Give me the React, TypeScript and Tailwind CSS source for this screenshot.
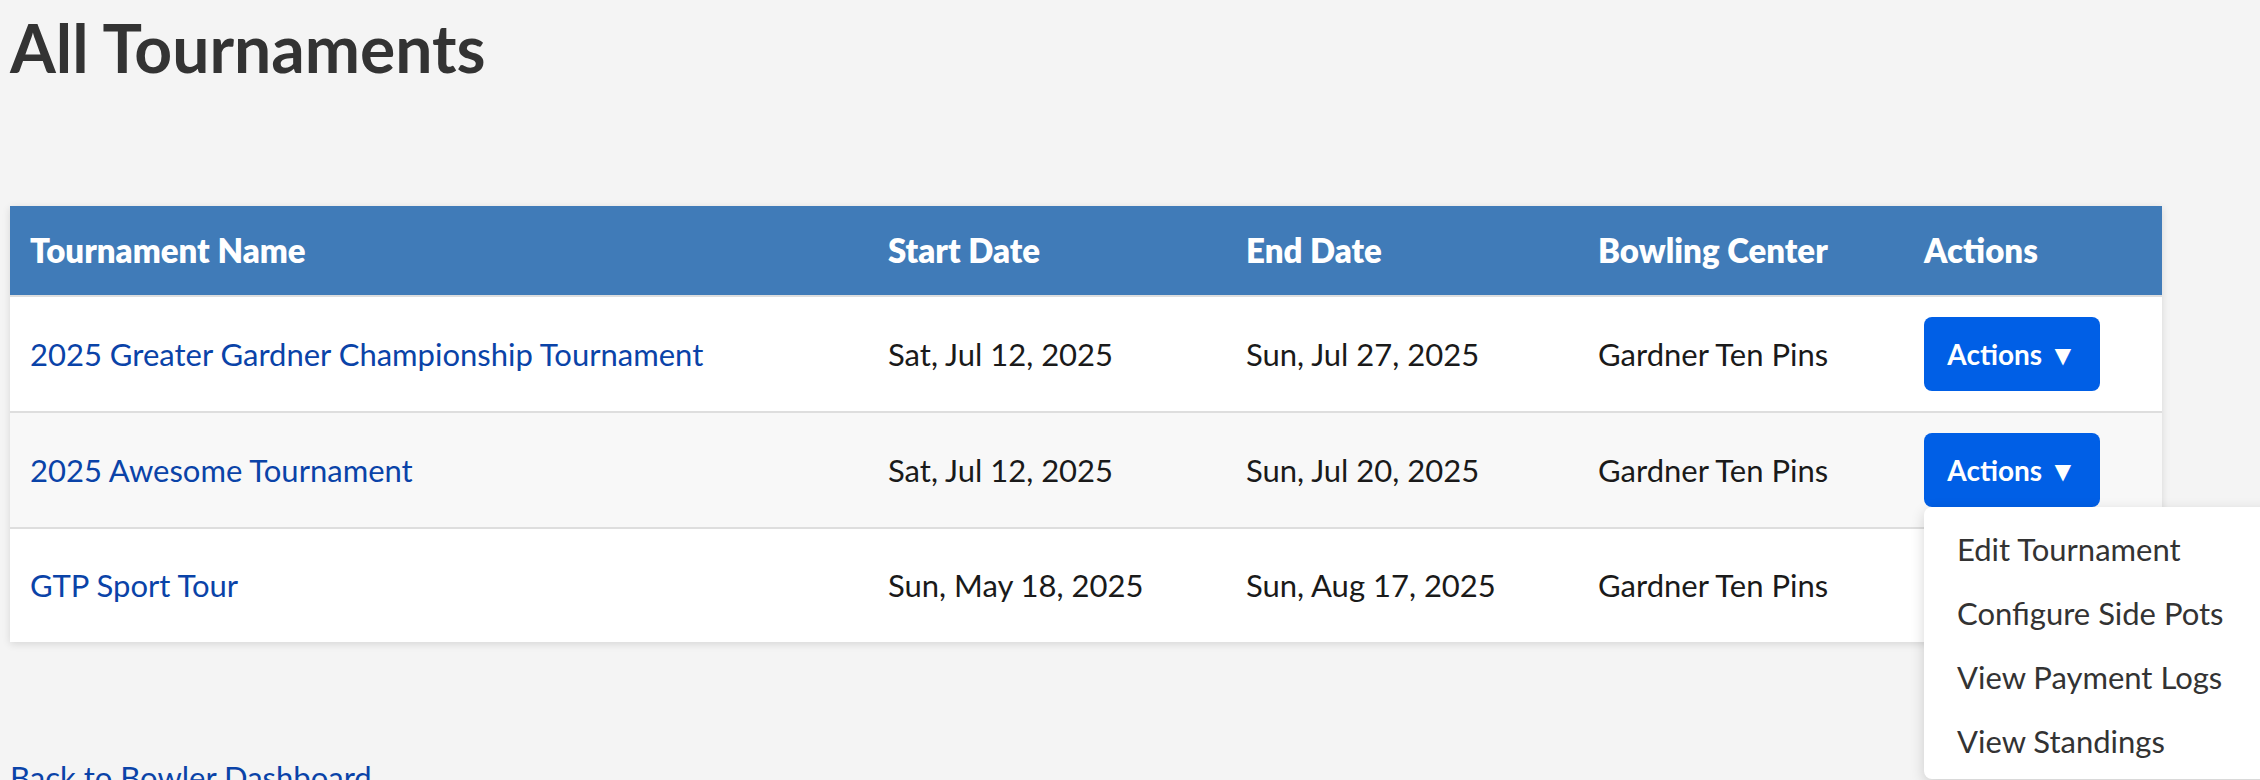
import { useState } from 'react';

interface Tournament {
  id: number;
  name: string;
  start: string;
  end: string;
  center: string;
}

const tournaments: Tournament[] = [
  { id: 1, name: '2025 Greater Gardner Championship Tournament', start: 'Sat, Jul 12, 2025', end: 'Sun, Jul 27, 2025', center: 'Gardner Ten Pins' },
  { id: 2, name: '2025 Awesome Tournament', start: 'Sat, Jul 12, 2025', end: 'Sun, Jul 20, 2025', center: 'Gardner Ten Pins' },
  { id: 3, name: 'GTP Sport Tour', start: 'Sun, May 18, 2025', end: 'Sun, Aug 17, 2025', center: 'Gardner Ten Pins' },
];

const menuItems = ['Edit Tournament', 'Configure Side Pots', 'View Payment Logs', 'View Standings'];

function ActionsMenu({ open, onToggle }: { open: boolean; onToggle: () => void }) {
  return (
    <div className="relative inline-block">
      <button
        onClick={onToggle}
        className="h-[74px] w-[176px] rounded-lg bg-[#005fe6] text-[28px] font-bold text-white"
      >
        Actions ▼
      </button>
      {open && (
        <div className="absolute left-0 top-full z-10 w-[380px] rounded-lg bg-white pb-[6px] pt-[10px] shadow-[0_4px_14px_rgba(0,0,0,0.16)]">
          {menuItems.map(m => (
            <div key={m} className="flex h-16 items-center px-[33px] text-[31px] text-[#333]">
              {m}
            </div>
          ))}
        </div>
      )}
    </div>
  );
}

export default function App() {
  const [openId, setOpenId] = useState<number | null>(2);

  return (
    <div className="h-screen w-full overflow-hidden bg-[#f4f4f4] pl-[10px] font-['Lato','Liberation_Sans',sans-serif]">
      <h1 className="pt-[8px] text-[66px] font-bold leading-[80px] text-[#333]">All Tournaments</h1>

      {/* 赛事表格 */}
      <table className="mt-[118px] w-[2152px] table-fixed border-collapse bg-white shadow-[0_2px_8px_rgba(0,0,0,0.12)]">
        <thead>
          <tr className="h-[90px] border-b-2 border-[#dedede] bg-[#407bb8] text-left text-[33px] text-white">
            <th className="w-[858px] pl-5 font-extrabold">Tournament Name</th>
            <th className="w-[358px] pl-5 font-extrabold">Start Date</th>
            <th className="w-[352px] pl-5 font-extrabold">End Date</th>
            <th className="w-[326px] pl-5 font-extrabold">Bowling Center</th>
            <th className="pl-5 font-extrabold">Actions</th>
          </tr>
        </thead>
        <tbody>
          {tournaments.map((t, i) => (
            <tr
              key={t.id}
              className={`text-[31px] text-[#1a1a1a] ${i === 1 ? 'bg-[#f8f8f8]' : 'bg-white'} ${
                i < tournaments.length - 1 ? 'h-[116px] border-b-2 border-[#dedede]' : 'h-[114px]'
              }`}
            >
              <td className="pl-5">
                <a href="#" className="text-[#0a43a8]">{t.name}</a>
              </td>
              <td className="pl-5">{t.start}</td>
              <td className="pl-5">{t.end}</td>
              <td className="pl-5">{t.center}</td>
              <td className="pl-5">
                <ActionsMenu
                  open={openId === t.id}
                  onToggle={() => setOpenId(openId === t.id ? null : t.id)}
                />
              </td>
            </tr>
          ))}
        </tbody>
      </table>

      <a href="#" className="mt-[112px] block text-[31px] text-[#0a43a8]">
        Back to Bowler Dashboard
      </a>
    </div>
  );
}
